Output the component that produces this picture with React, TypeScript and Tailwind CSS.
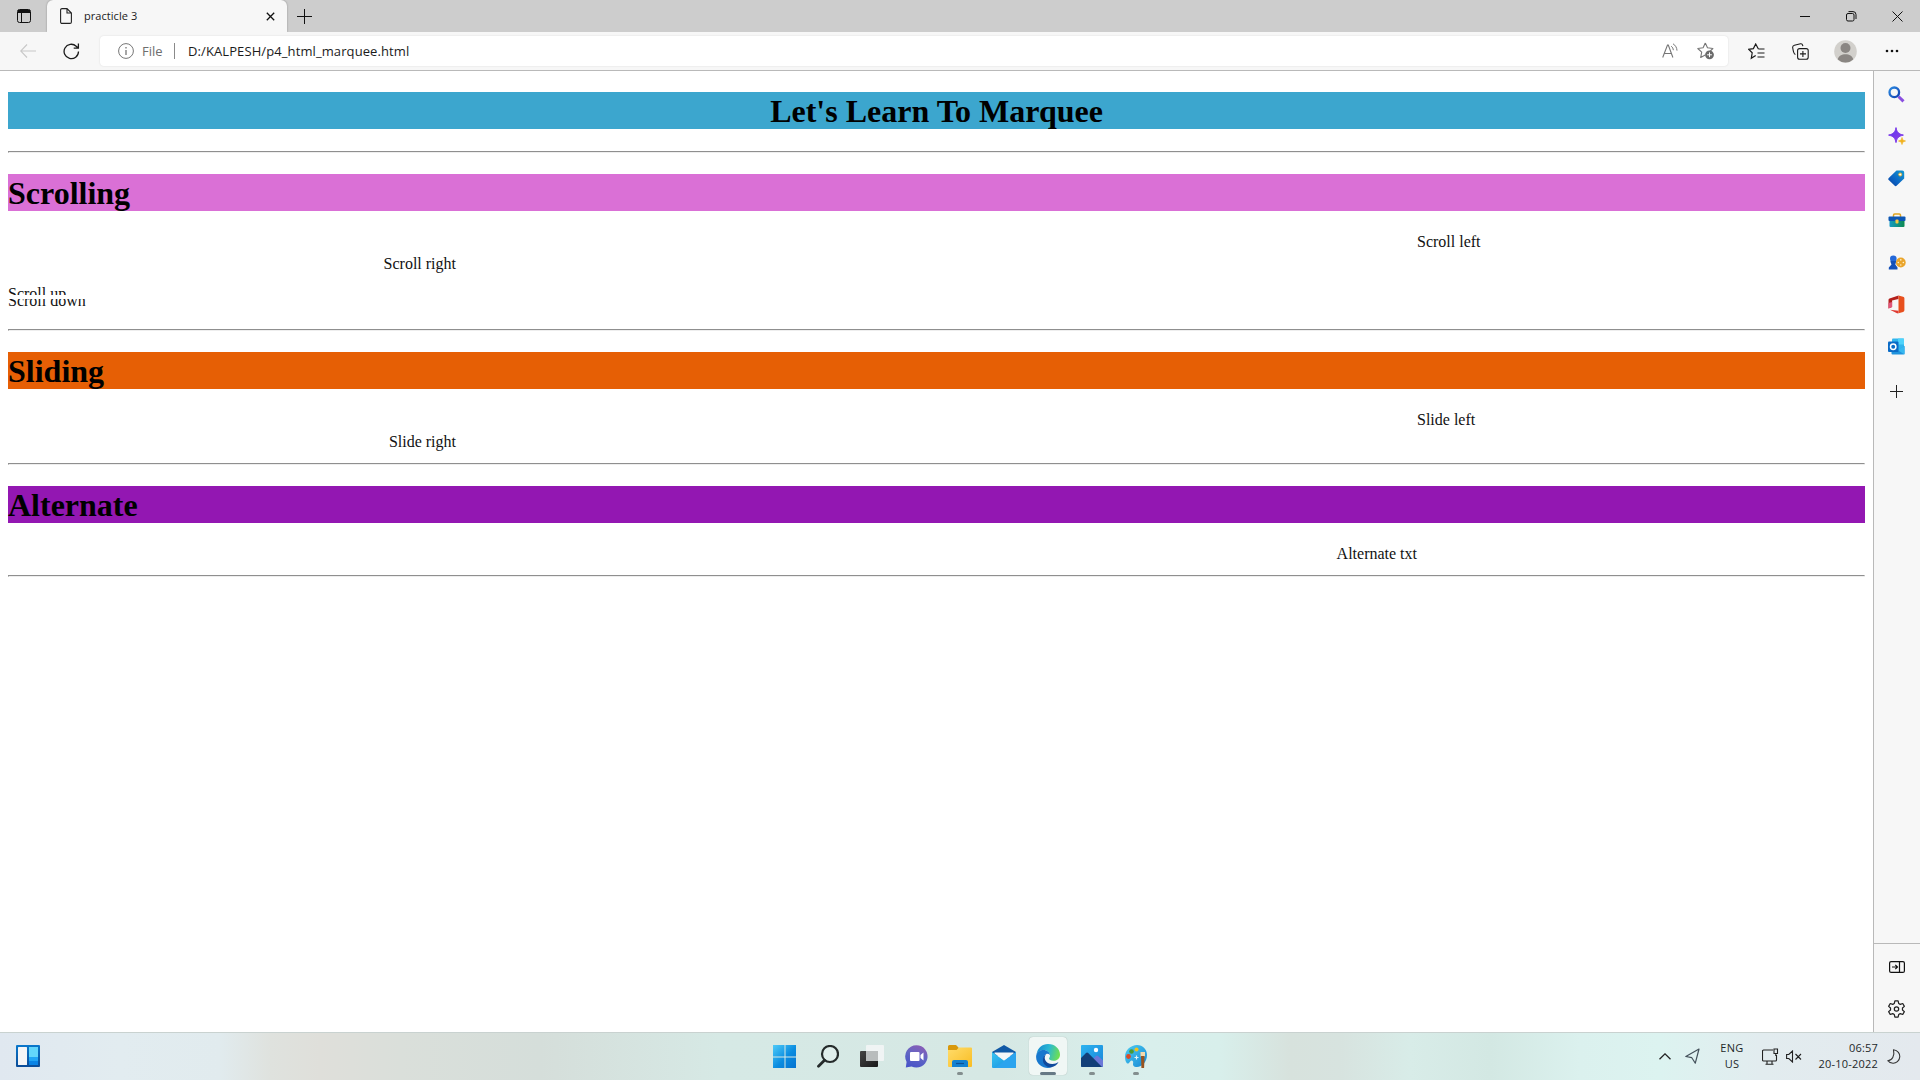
import React from "react";

type IconProps = { w: number; h: number; box?: string; className?: string; children: React.ReactNode };

function Icon({ w, h, box, className = "", children }: IconProps) {
  return (
    <svg
      width={w}
      height={h}
      viewBox={box ?? `0 0 ${w} ${h}`}
      fill="none"
      stroke="none"
      className={"block shrink-0 " + className}
    >
      {children}
    </svg>
  );
}

function TabStrip() {
  return (
    <div className="flex h-8 shrink-0 items-stretch bg-[#cdcdcd]">
      <div className="flex w-[47px] items-center pl-[17px]">
        <Icon w={14} h={14}>
          <rect x="0.5" y="0.5" width="13" height="13" rx="2" stroke="#111" />
          <path d="M1 1h12v3H1z" fill="#111" />
          <path d="M4.5 4v9" stroke="#111" />
        </Icon>
      </div>
      <div className="flex w-60 items-center rounded-t-md bg-[#f7f7f7] shadow-[0_0_2px_rgba(0,0,0,0.35)]">
        <Icon w={12} h={16} className="ml-[13px]">
          <path d="M0.6 2a1.4 1.4 0 0 1 1.4-1.4H7L11.4 5v9a1.4 1.4 0 0 1-1.4 1.4H2A1.4 1.4 0 0 1 .6 14zM7 .6V5h4.4" stroke="#222" strokeWidth="1.1" />
        </Icon>
        <span className="ml-3 w-[180px] text-[11px] leading-4 tracking-[0.05px] text-[#1b1b1b]">practicle 3</span>
        <Icon w={9} h={9} className="ml-[2px]">
          <path d="M.8.8l7.4 7.4M8.2.8L.8 8.2" stroke="#111" strokeWidth="1.3" />
        </Icon>
      </div>
      <div className="flex w-12 items-center pl-[10px]">
        <Icon w={15} h={15}>
          <path d="M7.5 0v15M0 7.5h15" stroke="#111" />
        </Icon>
      </div>
      <div className="ml-auto flex items-center">
        <Icon w={10} h={10}>
          <path d="M0 5.5h10" stroke="#111" />
        </Icon>
        <Icon w={11} h={11} className="ml-[36px]">
          <rect x="0.5" y="2.5" width="7.5" height="7.5" rx="1.5" stroke="#111" />
          <path d="M2.5.6H7A3 3 0 0 1 10 3.6V8" stroke="#111" />
        </Icon>
        <Icon w={11} h={11} className="mr-[17px] ml-[35px]">
          <path d="M.5.5l10 10M10.5.5l-10 10" stroke="#111" />
        </Icon>
      </div>
    </div>
  );
}

function Toolbar() {
  return (
    <div className="flex h-[39px] shrink-0 items-center border-b border-[#b9b9b9] bg-[#f7f7f7]">
      <Icon w={16} h={14} className="ml-5">
        <path d="M7 .5L.7 7 7 13.5M.7 7H16" stroke="#c8c8c8" strokeWidth="1.1" />
      </Icon>
      <Icon w={17} h={17} className="ml-[27px]">
        <path d="M15.5 8.5a7.2 7.2 0 1 1-2.3-5.3L15.4 5.2M15.4.5v4.7h-4.7" stroke="#1b1b1b" strokeWidth="1.3" />
      </Icon>
      <div className="ml-5 flex h-[30px] w-[1628px] items-center rounded bg-white shadow-[0_0_2px_rgba(0,0,0,0.12)]">
        <Icon w={16} h={16} className="ml-[18px]">
          <circle cx="8" cy="8" r="7.4" stroke="#767676" />
          <path d="M8 7v5M8 4v1.4" stroke="#767676" strokeWidth="1.3" />
        </Icon>
        <span className="ml-2 w-8 text-[13px] leading-4 text-[#6e6e6e]">File</span>
        <span className="h-4 w-px bg-[#8a8a8a]" />
        <span className="ml-[13px] text-[13px] leading-4 tracking-[0.1px] whitespace-nowrap text-[#1b1b1b]">
          D:/KALPESH/p4_html_marquee.html
        </span>
        <Icon w={16} h={16} className="ml-auto">
          <path d="M.7 14.5L5.5 2h.8l4.6 12.5M2.3 10.5h7" stroke="#767676" strokeWidth="1.1" />
          <path d="M9.2 3.2c1.3 1 2 2.2 2.1 4M11 .8c2.6 1.6 3.9 4 4 6.8" stroke="#767676" />
        </Icon>
        <Icon w={18} h={18} className="mr-[13px] ml-[19px]">
          <path d="M8.3 1l2.2 4.8 5.4.7-4 3.8M8.3 1L6.1 5.8.8 6.5l3.9 3.7-1 5.3 4.5-2.4" stroke="#767676" strokeWidth="1.1" strokeLinejoin="round" />
          <circle cx="12.5" cy="12.8" r="4.4" fill="#6b6b6b" />
          <path d="M12.5 10.4v4.8M10.1 12.8h4.8" stroke="#fff" />
        </Icon>
      </div>
      <Icon w={17} h={17} className="ml-5">
        <path d="M10.4 6L7.7 1 5.4 5.6.6 6.3l3.6 3.5-.9 5.5 4.4-2.8M10.4 6h6.1M9.5 10h7M9.5 14h7" stroke="#1b1b1b" strokeWidth="1.2" />
      </Icon>
      <Icon w={17} h={17} className="ml-[27px]">
        <rect x="5.6" y="5.6" width="10.6" height="10.6" rx="2" stroke="#1b1b1b" strokeWidth="1.1" />
        <path d="M10.9 8v6M8 10.9h6M3.4 11.5C2 11 1 7 .7 4.8.5 3.4 1.2 2.6 2.4 2.3L8.5.8c1.2-.3 2 .3 2.4 2.3" stroke="#1b1b1b" strokeWidth="1.1" />
      </Icon>
      <Icon w={23} h={23} className="ml-[25px]">
        <circle cx="11.5" cy="11.5" r="11.3" fill="#d2d0cc" />
        <circle cx="11.5" cy="8" r="5" fill="#8a8683" />
        <path d="M3.8 19.5c1-7 14.4-7 15.4 0a11.2 11.2 0 0 1-15.4 0z" fill="#8a8683" />
      </Icon>
      <Icon w={14} h={4} className="ml-[28px]">
        <circle cx="2" cy="2" r="1.3" fill="#111" />
        <circle cx="7" cy="2" r="1.3" fill="#111" />
        <circle cx="12" cy="2" r="1.3" fill="#111" />
      </Icon>
    </div>
  );
}

function Rule() {
  return <div className="h-[2px] border border-[#8f8f8f] border-r-[#eee] border-b-[#eee]" />;
}

const heading = "h-[37px] pt-px text-[32px] leading-[36px] font-bold text-black";

function Page() {
  return (
    <main className="min-w-0 flex-1 overflow-hidden bg-white px-2 pt-[21px] font-['Liberation_Serif',serif] text-base leading-[18px] text-[#111]">
      <h1 className={heading + " bg-[#3ca6ce] text-center"}>Let's Learn To Marquee</h1>
      <div className="pt-[22px] pb-[21px]"><Rule /></div>
      <h1 className={heading + " bg-[#da70d6]"}>Scrolling</h1>
      <div className="mt-[22px] h-[22px] pl-[1409px]">Scroll left</div>
      <div className="flex h-[22px] w-[448px] justify-end">Scroll right</div>
      <div className="mt-[8px] h-[10px] overflow-hidden">Scroll up</div>
      <div className="mt-[4px] flex h-[12px] items-end overflow-hidden">
        <span className="block h-[19px]">Scroll down</span>
      </div>
      <div className="pt-[18px] pb-[21px]"><Rule /></div>
      <h1 className={heading + " bg-[#e65f05]"}>Sliding</h1>
      <div className="mt-[22px] h-[22px] pl-[1409px]">Slide left</div>
      <div className="flex h-[22px] w-[448px] justify-end">Slide right</div>
      <div className="pt-[8px] pb-[21px]"><Rule /></div>
      <h1 className={heading + " bg-[#9317b2]"}>Alternate</h1>
      <div className="mt-[22px] flex h-[22px] w-[1409px] justify-end">Alternate txt</div>
      <div className="pt-[8px]"><Rule /></div>
    </main>
  );
}

function Sidebar() {
  return (
    <aside className="flex w-[47px] shrink-0 flex-col border-l border-[#b9b9b9] bg-[#f7f7f7] pr-px">
      <div className="flex flex-col items-center pt-[2px]">
        <div className="flex h-[42px] items-center">
          <Icon w={17} h={17}>
            <path d="M10.5 10.5l5 4.8" stroke="#8a4fe0" strokeWidth="3" />
            <circle cx="6.3" cy="6.3" r="4.8" stroke="url(#lens)" strokeWidth="2.3" />
            <defs>
              <linearGradient id="lens" x1="0" y1="0" x2="1" y2="1"><stop stopColor="#2b8ae0" /><stop offset="1" stopColor="#123fb0" /></linearGradient>
            </defs>
          </Icon>
        </div>
        <div className="flex h-[42px] items-center">
          <Icon w={18} h={18}>
            <path d="M8 .6c1 4.8 2.4 6.3 7.4 7.5C10.4 9.3 9 10.800 8 15.600 7 10.800 5.600 9.300.6 8.100 5.600 6.900 7 5.400 8 .600z" fill="url(#spark)" stroke="#7a38ea" />
            <path d="M14 10.500c.4 2.400 1 3 3.500 3.500-2.500.500-3.100 1.200-3.500 3.500-.4-2.300-1-3-3.500-3.500 2.500-.5 3.100-1.100 3.500-3.500z" fill="#f2b21d" stroke="#f2b21d" strokeWidth=".7" />
            <defs>
              <linearGradient id="spark" x1="0" y1="0" x2="1" y2="1"><stop stopColor="#4f3cf5" /><stop offset="1" stopColor="#a03be0" /></linearGradient>
            </defs>
          </Icon>
        </div>
        <div className="flex h-[42px] items-center">
          <Icon w={17} h={17}>
            <path d="M8.500.6h5.700a2 2 0 0 1 2 2V8.500L8.800 15.600a1.600 1.600 0 0 1-2.300 0L1 10.300a1.600 1.600 0 0 1 0-2.500z" fill="url(#tag)" />
            <circle cx="12.2" cy="4.5" r="1.5" fill="#fff" stroke="#e9b62c" />
            <defs>
              <linearGradient id="tag" x1="1" y1="0" x2="0" y2="1"><stop stopColor="#149bd0" /><stop offset=".6" stopColor="#0b63c4" /><stop offset="1" stopColor="#0a3f9c" /></linearGradient>
            </defs>
          </Icon>
        </div>
        <div className="flex h-[42px] items-center">
          <Icon w={18} h={14}>
            <path d="M5.500 4V2.200A1.200 1.200 0 0 1 6.700 1h4.600a1.200 1.200 0 0 1 1.200 1.200V4" stroke="#e0a521" strokeWidth="1.5" />
            <rect x=".5" y="3.5" width="17" height="4.5" rx="1" fill="#0c56b4" />
            <path d="M1.500 8h15v5a1 1 0 0 1-1 1h-13a1 1 0 0 1-1-1z" fill="url(#bag)" />
            <rect x="7.5" y="6.5" width="3" height="4" rx=".8" fill="#f6c844" />
            <defs>
              <linearGradient id="bag"><stop stopColor="#159bc4" /><stop offset="1" stopColor="#0d8a50" /></linearGradient>
            </defs>
          </Icon>
        </div>
        <div className="flex h-[42px] items-center">
          <Icon w={18} h={15}>
            <circle cx="12.8" cy="7.5" r="4.9" fill="#eaa52c" />
            <path d="M12.800 4.800v.1M12.800 10v.1M10.200 7.500h.1M15.300 7.500h.1" stroke="#fff3cf" strokeWidth="1.5" strokeLinecap="round" />
            <circle cx="5.3" cy="3.8" r="3.3" fill="#2468d8" />
            <path d="M2.500 6h5.500v1L7.300 9.500 9.500 12.500V14.500H.8V12.500L3.500 9.500 2.500 7z" fill="#1450b8" />
          </Icon>
        </div>
        <div className="flex h-[42px] items-center">
          <Icon w={17} h={19}>
            <path d="M10.500.5L1.500 3.600A1.500 1.500 0 0 0 .5 5v8.600l3.600-1.500V5.500L10.500 4z" fill="#b3201c" />
            <path d="M10.500.5l4.600 1.200A1.700 1.700 0 0 1 16.400 3.300v12a1.700 1.700 0 0 1-1.300 1.600l-4.600 1.400z" fill="#e8501e" />
            <path d="M2 14.800l8.500 1v2.500c-.5.200-1 .2-1.500 0z" fill="#e03a32" />
            <path d="M.5 8v5.600l3.600-1.500V7z" fill="#e0567a" />
          </Icon>
        </div>
        <div className="flex h-[42px] items-center">
          <Icon w={17} h={17}>
            <rect x="4" y=".5" width="12" height="12" rx="1" fill="#31b5ed" />
            <rect x="10" y=".5" width="6" height="6" fill="#4fd3fb" />
            <path d="M3.500 8.500l6.500 3.500 6.500-4v7.500a1 1 0 0 1-1 1h-11a1 1 0 0 1-1-1z" fill="#1f93dd" />
            <path d="M16.500 8v8.500L9.500 12z" fill="#35b8f0" />
            <rect x="0" y="3.5" width="10.5" height="10.5" rx="1" fill="#0a6bc6" />
            <circle cx="5.2" cy="8.7" r="2.7" stroke="#fff" strokeWidth="1.5" />
          </Icon>
        </div>
        <div className="flex h-[48px] items-center">
          <Icon w={13} h={13}><path d="M6.500 0v13M0 6.500h13" stroke="#222" /></Icon>
        </div>
      </div>
      <div className="-mr-px mt-auto flex h-[89px] flex-col items-center border-t border-[#b9b9b9] pt-[2px] pr-px">
        <div className="flex h-[42px] items-center">
          <Icon w={16} h={12}>
            <rect x=".6" y=".6" width="14.8" height="10.8" rx="1.5" stroke="#111" strokeWidth="1.2" />
            <path d="M10.500 1v10M3 6h5.500M6.300 3.800L8.500 6 6.300 8.200" stroke="#111" strokeWidth="1.2" />
          </Icon>
        </div>
        <div className="flex h-[42px] items-center">
          <Icon w={17} h={18} box="3.2 2.5 17.6 19">
            <circle cx="12" cy="12" r="2.3" stroke="#222" strokeWidth="1.3" />
            <path d="M10.300 3.500h3.400l.6 2.600 1.700 1 2.600-.9 1.700 3-2 1.800v2l2 1.800-1.700 3-2.600-.9-1.700 1-.6 2.600h-3.400l-.6-2.600-1.700-1-2.600.9-1.700-3 2-1.800v-2l-2-1.800 1.700-3 2.600.9 1.700-1z" stroke="#222" strokeWidth="1.3" strokeLinejoin="round" />
          </Icon>
        </div>
      </div>
    </aside>
  );
}

function AppButton({ children, state }: { children: React.ReactNode; state?: "open" | "active" }) {
  return (
    <div className="flex w-11 justify-center">
      <div
        className={
          "relative flex h-[38px] w-[38px] items-center justify-center rounded " +
          (state === "active" ? "bg-[#f0f7f5] shadow-[0_0_1px_rgba(0,0,0,0.3)]" : "")
        }
      >
        {children}
        {state === "open" && <span className="absolute bottom-0 h-[3px] w-[6px] rounded-full bg-[#838e8e]" />}
        {state === "active" && <span className="absolute bottom-0 h-[3px] w-4 rounded-full bg-[#667985]" />}
      </div>
    </div>
  );
}

function Taskbar() {
  return (
    <footer className="flex h-12 shrink-0 items-center border-t border-[#c9d2d0] bg-[linear-gradient(90deg,#e0e8f0_0px,#e2ecf0_120px,#e1ebee_220px,#dfe2de_270px,#dfdfda_320px,#dadfda_400px,#d5deda_540px,#d6e9e5_720px,#d6e8e4_1000px,#d9efec_1150px,#d8efeb_1220px,#d7e2dd_1290px,#d7e3df_1340px,#d8ece8_1410px,#d3e8e3_1490px,#dbf1ee_1580px,#dcf3f0_1660px,#e2ecef_1760px,#e4e9ee_1920px)] pb-px">
      <Icon w={24} h={22} className="ml-4">
        <rect width="24" height="22" rx="1" fill="url(#wid)" />
        <rect x="2" y="2" width="9" height="18" rx=".5" fill="#f4f5f7" />
        <rect x="13" y="2" width="9" height="10" fill="#63d6fb" />
        <rect x="13" y="12" width="9" height="4" fill="#21a5f5" />
        <rect x="13" y="16" width="9" height="4" fill="#0a84e6" />
        <defs>
          <linearGradient id="wid" x1="0" y1="0" x2="0" y2="1"><stop stopColor="#0a78cc" /><stop offset="1" stopColor="#0b4c98" /></linearGradient>
        </defs>
      </Icon>
      <div className="ml-[722px] flex">
        <AppButton>
          <Icon w={23} h={23}>
            <path d="M0 0h11.500v11.500H0zM12.500 0H23v11.500H12.500zM0 12.500h11.500V23H0zM12.500 12.500H23V23H12.500z" fill="url(#win)" />
            <defs>
              <linearGradient id="win" x1="0" y1="0" x2="1" y2="1"><stop stopColor="#4fcbf8" /><stop offset=".55" stopColor="#0a8ce0" /><stop offset="1" stopColor="#0673d0" /></linearGradient>
            </defs>
          </Icon>
        </AppButton>
        <AppButton>
          <Icon w={22} h={23}>
            <circle cx="13" cy="9" r="8" stroke="#252b2b" strokeWidth="2.2" fill="#e0efec" />
            <path d="M7.500 15.200L1.500 21.200" stroke="#252b2b" strokeWidth="2.8" strokeLinecap="round" />
          </Icon>
        </AppButton>
        <AppButton>
          <Icon w={24} h={22}>
            <rect x="0" y="6" width="18" height="16" rx="1" fill="url(#tv)" />
            <rect x="6" y="0" width="18" height="16" rx="1" fill="#f3f5f5" fillOpacity=".9" />
            <path d="M6 6h12v10H6z" fill="#b8bcbc" />
            <defs>
              <linearGradient id="tv" x1="0" y1="0" x2="1" y2="1"><stop stopColor="#444" /><stop offset="1" stopColor="#191919" /></linearGradient>
            </defs>
          </Icon>
        </AppButton>
        <AppButton>
          <Icon w={23} h={23}>
            <path d="M11.500.2A11.200 11.200 0 1 1 6.500 21.500L.8 22.600 1.600 17A11.300 11.300 0 0 1 11.500.2z" fill="url(#chat)" />
            <rect x="5" y="7" width="9.5" height="9" rx="1" fill="#fff" />
            <path d="M15.500 10l3-2.500v8l-3-2.500z" fill="#fff" />
            <defs>
              <linearGradient id="chat" x1=".8" y1="0" x2=".4" y2="1"><stop stopColor="#8d5bb5" /><stop offset=".5" stopColor="#6266c4" /><stop offset="1" stopColor="#4a55c8" /></linearGradient>
            </defs>
          </Icon>
        </AppButton>
        <AppButton state="open">
          <Icon w={24} h={22}>
            <path d="M0 1.500A1.500 1.500 0 0 1 1.500 0H8l2.500 2.500V7H0z" fill="#d9980b" />
            <path d="M0 5h8.500l2.500-2.500h12a1 1 0 0 1 1 1V21a1 1 0 0 1-1 1H1a1 1 0 0 1-1-1z" fill="url(#fold)" />
            <path d="M4 22v-5a2 2 0 0 1 2-2h12a2 2 0 0 1 2 2v5z" fill="#1280d0" />
            <path d="M8 18.500h8" stroke="#0b4f96" strokeWidth="1.2" />
            <defs>
              <linearGradient id="fold" x1="0" y1="0" x2="1" y2="1"><stop stopColor="#ffdc6b" /><stop offset="1" stopColor="#f9bd23" /></linearGradient>
            </defs>
          </Icon>
        </AppButton>
        <AppButton>
          <Icon w={24} h={23}>
            <path d="M0 7L12 0l12 7v4H0z" fill="#1058a5" />
            <path d="M0 7l12 8.500L24 7v15a1 1 0 0 1-1 1H1a1 1 0 0 1-1-1z" fill="url(#mail)" />
            <path d="M24 7L3 23h20a1 1 0 0 0 1-1z" fill="#2ba4ee" />
            <path d="M2.500 8.500L12 15.500l9.500-7V7.500h-19z" fill="#f5f6f8" />
            <defs>
              <linearGradient id="mail" x1="0" y1="0" x2="1" y2="1"><stop stopColor="#38c5f2" /><stop offset="1" stopColor="#128ade" /></linearGradient>
            </defs>
          </Icon>
        </AppButton>
        <AppButton state="active">
          <Icon w={24} h={24}>
            <path d="M.5 10.500C1.500 4 6.300 0 12 0c7 0 12 5 12 10.500 0 4-3 6.300-6.500 6.300-3 0-4.500-1.200-4.500-2.200 0-.7 1-1.300 1-3.200C14 8.500 11 6 7.500 6 4.500 6 2 7.600.5 10.500z" fill="url(#edgeA)" />
            <path d="M.2 11.500C1 8 4 6 7.500 6c3.700 0 6.300 2.600 6.500 5-1-1-2.500-1.400-3.700-1C6 12 7 21 15.500 23.300 9 26-1 20.500.2 11.500z" fill="#1778ce" />
            <path d="M10.300 10c-3.500 3.500-1 10 6 10 2.500 0 4.500-.8 6.200-2-1.500 3-4 4.600-7 5.300C7 23.500 4 14 10.300 10z" fill="#0f4a9c" />
            <defs>
              <linearGradient id="edgeA" x1="0" y1=".3" x2="1" y2=".5"><stop stopColor="#168bd0" /><stop offset=".5" stopColor="#2ab8d3" /><stop offset="1" stopColor="#6fe04f" /></linearGradient>
            </defs>
          </Icon>
        </AppButton>
        <AppButton state="open">
          <Icon w={22} h={22}>
            <rect width="22" height="22" rx="1" fill="url(#sky)" />
            <path d="M12 14l3-3a1.500 1.500 0 0 1 2 0l5 4.500V21a1 1 0 0 1-1 1h-9z" fill="#6c78d8" />
            <path d="M0 13l5-5a1.500 1.500 0 0 1 2.200 0L21 22H1a1 1 0 0 1-1-1z" fill="#123f78" />
            <circle cx="15" cy="5" r="2.2" fill="#fff" />
            <defs>
              <linearGradient id="sky" x1="0" y1="0" x2="1" y2="1"><stop stopColor="#2cb3f0" /><stop offset="1" stopColor="#1a85d8" /></linearGradient>
            </defs>
          </Icon>
        </AppButton>
        <AppButton state="open">
          <Icon w={23} h={23}>
            <path d="M12 0c6 0 10 4.500 10 10 0 7-5 12-10 12-3.500 0-4-1.500-4-3 .5-2 0-3.500-1.500-3.500C5 15.500 4.500 19 2.500 18.500.8 18 0 14.500 0 11.500 0 5 6 0 12 0z" fill="url(#pal)" />
            <circle cx="6.500" cy="6.500" r="2.3" fill="#4a9a35" />
            <circle cx="11.500" cy="4.500" r="2" fill="#f2c21c" />
            <circle cx="3.500" cy="11.500" r="2.400" fill="#dc4a25" />
            <path d="M11.500 10.500v4M9.500 12.500h4" stroke="#e3f4f6" strokeWidth="1.200" />
            <path d="M15.500 7h4.500v4.500h-4.500z" fill="#f3d9ad" />
            <path d="M16 11h3.500l-.4 12h-2.700z" fill="#985420" />
            <defs>
              <linearGradient id="pal" x1="0" y1="0" x2="1" y2="1"><stop stopColor="#4ccdf3" /><stop offset="1" stopColor="#1787d3" /></linearGradient>
            </defs>
          </Icon>
        </AppButton>
      </div>
      <div className="ml-auto flex items-center text-[#23282a]">
        <Icon w={12} h={7}><path d="M.5 6.300L6 .9l5.500 5.400" stroke="#222" strokeWidth="1.3" /></Icon>
        <Icon w={15} h={16} className="ml-[14px]">
          <path d="M14 1L.8 8.500l6 1.200 3.500 5.500z" stroke="#43505a" strokeWidth="1.2" strokeLinejoin="round" />
        </Icon>
        <div className="ml-[19px] w-[26px] text-center text-[11px] leading-4 tracking-[0.3px] whitespace-nowrap">
          <div>ENG</div>
          <div>US</div>
        </div>
        <Icon w={17} h={17} className="ml-[17px]">
          <path d="M11 2H1.500a1 1 0 0 0-1 1v9a1 1 0 0 0 1 1h12a1 1 0 0 0 1-1V7M5 13v3M10 13v3M3.500 16.300h8M12 1h3.500v4.500H12zM13.800 5.500V8" stroke="#222" strokeWidth="1.1" />
        </Icon>
        <Icon w={16} h={13} className="ml-[7px]">
          <path d="M.6 4.500h2.200L6.500 1v11L2.800 8.500H.6zM9.500 4l5.500 5.500M15 4L9.500 9.500" stroke="#222" strokeWidth="1.1" />
        </Icon>
        <div className="ml-[15px] w-[61px] text-right text-[11px] leading-4 tracking-[0.2px] whitespace-nowrap">
          <div>06:57</div>
          <div>20-10-2022</div>
        </div>
        <Icon w={14} h={15} className="mr-[19px] ml-[9px]">
          <path d="M6.500.8c4.500.5 6.500 4 6.300 7C12.500 12 9 14.300 6 14.200c-2.300 0-4-.9-5.200-2.500C5 11.500 8 7 6.500.8z" stroke="#333" strokeWidth="1.1" strokeLinejoin="round" />
        </Icon>
      </div>
    </footer>
  );
}

export default function App() {
  return (
    <div className="flex h-[1080px] w-[1920px] flex-col overflow-hidden bg-white font-['Open_Sans','Noto_Sans',sans-serif]">
      <TabStrip />
      <Toolbar />
      <div className="flex min-h-0 flex-1">
        <Page />
        <Sidebar />
      </div>
      <Taskbar />
    </div>
  );
}
